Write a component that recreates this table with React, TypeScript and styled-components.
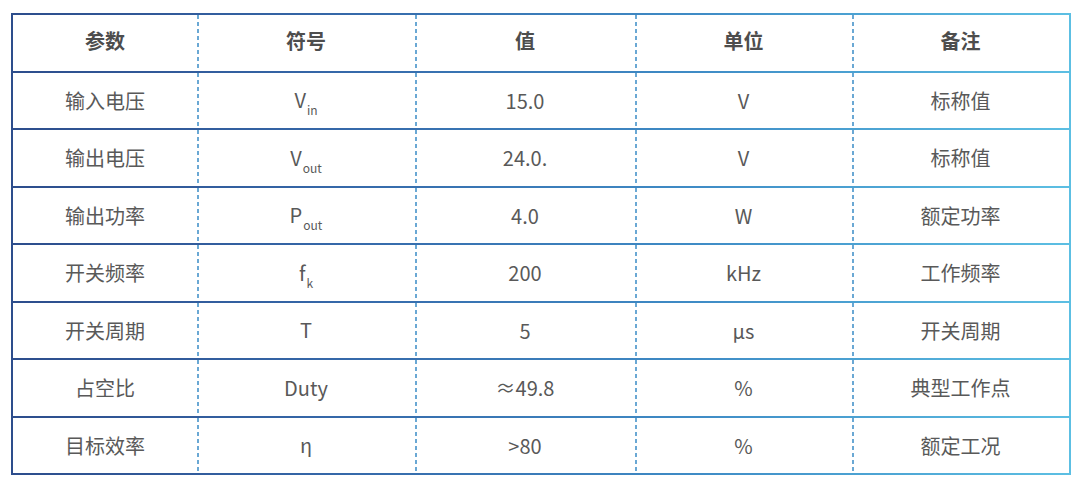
import styled, { createGlobalStyle } from "styled-components";

const GlobalStyle = createGlobalStyle`
  html, body {
    margin: 0;
    padding: 0;
    background: #ffffff;
  }
  body {
    font-family: "Noto Sans CJK SC", "Noto Sans", sans-serif;
  }
`

const Page = styled.div`
  width: 1080px;
  height: 483px;
  padding: 13px 0 0 11px;
  box-sizing: border-box;
`

const Frame = styled.div`
  width: 1060px;
  height: 462px;
  box-sizing: border-box;
  padding: 2px;
  display: grid;
  grid-auto-rows: 1fr;
  row-gap: 2px;
  background: linear-gradient(90deg, #2d4d8c 0%, #3567a8 30%, #3f8cc6 65%, #5cbfe3 100%);
`

const Row = styled.div`
  display: grid;
  grid-template-columns: 184px 218px 220px 217px 217px;
  background: #ffffff;
`

const Cell = styled.div<{ $head?: boolean; $first?: boolean }>`
  display: flex;
  align-items: center;
  justify-content: center;
  padding-bottom: ${p => (p.$head ? "5px" : "0")};
  font-size: 20px;
  font-weight: ${p => (p.$head ? 700 : 400)};
  color: ${p => (p.$head ? "#4d4d4d" : "#595959")};
  background: ${p =>
    p.$first
      ? "none"
      : "linear-gradient(to bottom, #6aa8d4 55%, transparent 0) left top / 2px 7px repeat-y"};
`

const Symbol = styled.span`
  line-height: 1;
`

const Sub = styled.span`
  font-size: 12px;
  position: relative;
  top: 7px;
  margin-left: 1px;
`

interface RowData {
  name: string
  sym: string
  sub?: string
  value: string
  unit: string
  note: string
}

const rows: RowData[] = [
  { name: "输入电压", sym: "V", sub: "in", value: "15.0", unit: "V", note: "标称值" },
  { name: "输出电压", sym: "V", sub: "out", value: "24.0.", unit: "V", note: "标称值" },
  { name: "输出功率", sym: "P", sub: "out", value: "4.0", unit: "W", note: "额定功率" },
  { name: "开关频率", sym: "f", sub: "k", value: "200", unit: "kHz", note: "工作频率" },
  { name: "开关周期", sym: "T", value: "5", unit: "μs", note: "开关周期" },
  { name: "占空比", sym: "Duty", value: "≈49.8", unit: "%", note: "典型工作点" },
  { name: "目标效率", sym: "η", value: ">80", unit: "%", note: "额定工况" },
]

export default function App() {
  return <Page>
    <GlobalStyle />
    <Frame>
      <Row>
        <Cell $head $first>参数</Cell>
        <Cell $head>符号</Cell>
        <Cell $head>值</Cell>
        <Cell $head>单位</Cell>
        <Cell $head>备注</Cell>
      </Row>
      {
        rows.map((r, index) => (<Row key={`${r.name}_${index}`}>
          <Cell $first>{r.name}</Cell>
          <Cell><Symbol>{r.sym}{r.sub && <Sub>{r.sub}</Sub>}</Symbol></Cell>
          <Cell>{r.value}</Cell>
          <Cell>{r.unit}</Cell>
          <Cell>{r.note}</Cell>
        </Row>))
      }
    </Frame>
  </Page>
}
